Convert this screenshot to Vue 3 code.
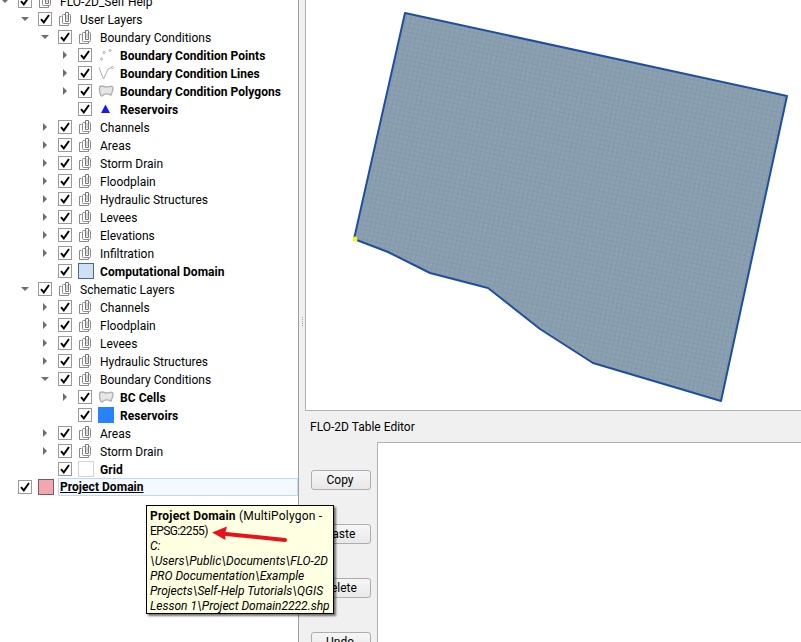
<template>
  <div class="app">
    <div class="tree">
      <div v-for="row in rows" :key="row.id" class="row" :class="'depth-' + row.depth">
        <span class="arrow" :class="row.arrow"></span>
        <span class="check">
          <svg width="10" height="10" viewBox="0 0 10 10"><path d="M1 5.2 L3.8 8.4 L9 1" fill="none" stroke="#000" stroke-width="1.9" /></svg>
        </span>
        <span class="icon">
          <svg v-if="row.icon === 'group'" width="16" height="18" viewBox="0 0 16 18" fill="none" stroke="#8a8a8a">
            <path d="M3.5 6.5 H1.5 V15.5 H10.5 V13.5" />
            <rect x="4.5" y="4.5" width="8" height="9" rx="1" fill="#fff" />
            <path d="M7.5 2.5 H10.5 V11.5 H7.5 Z" fill="#fff" stroke="#777" />
            <path d="M9 5 V10" stroke="#aaa" />
          </svg>
          <svg v-else-if="row.icon === 'points'" width="16" height="18" viewBox="0 0 16 18" fill="none" stroke="#aaa">
            <circle cx="12" cy="4.5" r="1" />
            <circle cx="6" cy="6.5" r="1" />
            <circle cx="3.5" cy="13" r="1" />
          </svg>
          <svg v-else-if="row.icon === 'lines'" width="16" height="18" viewBox="0 0 16 18" fill="none" stroke="#b0b0b0">
            <path d="M1 3.5 L5.5 15 L10 5 L14 3.5" />
            <circle cx="14.5" cy="3.5" r="1" />
          </svg>
          <svg v-else-if="row.icon === 'poly'" width="16" height="18" viewBox="0 0 16 18">
            <path d="M1.5 6.5 C1.5 3 5 4 8 5 C11 5.5 15 2.5 15 6 C15 9 14 11 13 13 C10 11.5 6 11.5 4 14 C2 13.5 1.5 9 1.5 6.5 Z" fill="#e6e6e6" stroke="#b0b0b0" stroke-width="1.4" />
          </svg>
          <svg v-else-if="row.icon === 'triangle'" width="16" height="18" viewBox="0 0 16 18">
            <path d="M7.5 4.5 L12 13 H3 Z" fill="#1a1aee" />
          </svg>
          <span v-else class="swatch" :class="row.icon"></span>
        </span>
        <span class="label" :class="{ bold: row.bold, current: row.current }">{{ row.label }}</span>
      </div>
    </div>

    <div class="splitter"><span v-for="n in 5" :key="n" class="grip"></span></div>

    <div class="right">
      <div class="canvas">
        <svg width="495" height="409" viewBox="306 0 495 409">
          <defs>
            <pattern id="cells" width="4.6" height="4.6" patternUnits="userSpaceOnUse" patternTransform="rotate(12.2)">
              <rect width="4.6" height="4.6" fill="#8ca1b0" />
              <path d="M0 0 H4.6 M0 0 V4.6" stroke="#7a93a6" stroke-width="1" />
            </pattern>
          </defs>
          <polygon :points="domain" fill="url(#cells)" stroke="#1f4ea1" stroke-width="2" stroke-linejoin="round" />
          <circle cx="355" cy="239" r="2.5" fill="#f5f520" />
        </svg>
      </div>

      <div class="editor-title">FLO-2D Table Editor</div>
      <div class="editor">
        <div class="buttons">
          <button v-for="b in buttons" :key="b" class="btn">{{ b }}</button>
        </div>
        <div class="table"></div>
      </div>
    </div>

    <div class="tooltip">
      <div class="tip-head"><b>Project Domain</b> (MultiPolygon -</div>
      <div class="tip-epsg">EPSG:2255)</div>
      <div class="path">C:</div>
      <div class="path">\Users\Public\Documents\FLO-2D</div>
      <div class="path">PRO Documentation\Example</div>
      <div class="path">Projects\Self-Help Tutorials\QGIS</div>
      <div class="path">Lesson 1\Project Domain2222.shp</div>
    </div>

    <svg class="pointer" width="90" height="30" viewBox="0 0 90 30">
      <path d="M79 19 L20 13" stroke="#e8141c" stroke-width="4" stroke-linecap="round" />
      <path d="M6 11.5 L21 5.5 L19 13 L19.5 19 Z" fill="#e8141c" />
    </svg>
  </div>
</template>

<script setup>
const domain = '405,13 787,96 721,401 593,363 540,329 488,288 430,273 388,252 354,239'

const buttons = ['Copy', 'Paste', 'Delete', 'Undo']

const spec = [
  [0, 'down', 'group', 'FLO-2D_Self Help'],
  [1, 'down', 'group', 'User Layers'],
  [2, 'down', 'group', 'Boundary Conditions'],
  [3, 'closed', 'points', 'Boundary Condition Points', true],
  [3, 'closed', 'lines', 'Boundary Condition Lines', true],
  [3, 'closed', 'poly', 'Boundary Condition Polygons', true],
  [3, '', 'triangle', 'Reservoirs', true],
  [2, 'closed', 'group', 'Channels'],
  [2, 'closed', 'group', 'Areas'],
  [2, 'closed', 'group', 'Storm Drain'],
  [2, 'closed', 'group', 'Floodplain'],
  [2, 'closed', 'group', 'Hydraulic Structures'],
  [2, 'closed', 'group', 'Levees'],
  [2, 'closed', 'group', 'Elevations'],
  [2, 'closed', 'group', 'Infiltration'],
  [2, '', 'blue-light', 'Computational Domain', true],
  [1, 'down', 'group', 'Schematic Layers'],
  [2, 'closed', 'group', 'Channels'],
  [2, 'closed', 'group', 'Floodplain'],
  [2, 'closed', 'group', 'Levees'],
  [2, 'closed', 'group', 'Hydraulic Structures'],
  [2, 'down', 'group', 'Boundary Conditions'],
  [3, 'closed', 'poly', 'BC Cells', true],
  [3, '', 'blue', 'Reservoirs', true],
  [2, 'closed', 'group', 'Areas'],
  [2, 'closed', 'group', 'Storm Drain'],
  [2, '', 'white', 'Grid', true],
  [0, '', 'pink', 'Project Domain', true, true]
]

const rows = spec.map(([depth, arrow, icon, label, bold, current], id) => ({
  id, depth, arrow, icon, label, bold, current
}))
</script>

<style scoped>
.app {
  position: relative;
  display: flex;
  width: 801px;
  height: 642px;
  overflow: hidden;
  background: #f0f0f0;
  font-family: Roboto, "Open Sans", sans-serif;
  font-size: 12px;
  color: #000;
}

/* layer tree */
.tree {
  width: 298px;
  flex: none;
  background: #fff;
  border-right: 1px solid #a0a0a0;
  margin-top: -8px;
  height: 650px;
}
.row {
  display: flex;
  align-items: center;
  height: 18px;
  white-space: nowrap;
}
.depth-1 { padding-left: 20px; }
.depth-2 { padding-left: 40px; }
.depth-3 { padding-left: 60px; }

.arrow {
  position: relative;
  width: 18px;
  height: 18px;
  flex: none;
}
.arrow.closed::after {
  content: "";
  position: absolute;
  left: 3px;
  top: 5px;
  border-left: 4px solid #6e6e6e;
  border-top: 4px solid transparent;
  border-bottom: 4px solid transparent;
}
.arrow.down::after {
  content: "";
  position: absolute;
  left: 1px;
  top: 7px;
  border-top: 4px solid #6e6e6e;
  border-left: 4px solid transparent;
  border-right: 4px solid transparent;
}
.check {
  width: 14px;
  height: 14px;
  flex: none;
  box-sizing: border-box;
  border: 1px solid #9a9a9a;
  background: #fff;
  display: flex;
  align-items: center;
  justify-content: center;
}
.icon {
  width: 16px;
  height: 18px;
  flex: none;
  margin-left: 6px;
  margin-right: 6px;
  display: flex;
  align-items: center;
}
.swatch {
  display: block;
  width: 16px;
  height: 16px;
  box-sizing: border-box;
  border: 1px solid #999;
}
.blue-light { background: #cde1f5; border-color: #4a6a8a; }
.blue { background: #2a82fa; border-color: #2a82fa; }
.white { background: #fff; border-color: #d4d4d4; }
.pink { background: #f4a6b0; border-color: #7a5a60; }
.label { line-height: 18px; padding-top: 1px; }
.bold { font-weight: 700; letter-spacing: 0.05px; }
.current {
  flex: 1;
  margin-left: -2px;
  padding: 0 0 0 1px;
  height: 18px;
  box-sizing: border-box;
  border: 1px solid #bcdcf4;
  background: #f3f9fe;
  text-decoration: underline;
  line-height: 17px;
}

/* splitter */
.splitter {
  width: 6px;
  flex: none;
  display: flex;
  flex-direction: column;
  justify-content: center;
  align-items: center;
  gap: 1px;
}
.grip {
  width: 1px;
  height: 1px;
  background: #aaa;
}

/* right side */
.right {
  flex: 1;
  display: flex;
  flex-direction: column;
  min-width: 0;
}
.canvas {
  height: 411px;
  box-sizing: border-box;
  background: #fff;
  border: 1px solid #b0b0b0;
  border-top: 0;
  border-right: 0;
  flex: none;
}
.canvas svg { display: block; }
.editor-title {
  height: 31px;
  line-height: 32px;
  padding-left: 5px;
}
.editor {
  display: flex;
  flex: 1;
}
.buttons {
  width: 72px;
  flex: none;
  padding: 28px 0 0 6px;
  box-sizing: border-box;
  display: flex;
  flex-direction: column;
  gap: 34px;
}
.btn {
  width: 60px;
  height: 20px;
  flex: none;
  padding: 0 2px 0 0;
  border: 1px solid #adadad;
  border-radius: 3px;
  background: linear-gradient(#f6f6f6, #e8e8e8);
  font-family: inherit;
  font-size: 12px;
}
.table {
  flex: 1;
  background: #fff;
  border: 1px solid #b0b0b0;
  border-right: 0;
  border-bottom: 0;
}

/* hover tooltip */
.tooltip {
  position: absolute;
  left: 146px;
  top: 505px;
  width: 188px;
  height: 109px;
  box-sizing: border-box;
  padding: 3px 3px;
  background: #ffffe1;
  border: 1px solid #000;
  box-shadow: 2px 2px 2px rgba(0, 0, 0, 0.55);
  line-height: 15px;
  white-space: nowrap;
}
.tip-head { letter-spacing: 0.2px; }
.tip-epsg { letter-spacing: -0.6px; }
.path { font-style: italic; }
.pointer {
  position: absolute;
  left: 206px;
  top: 521px;
}
</style>

<style>
html, body { margin: 0; overflow: hidden; }
</style>
